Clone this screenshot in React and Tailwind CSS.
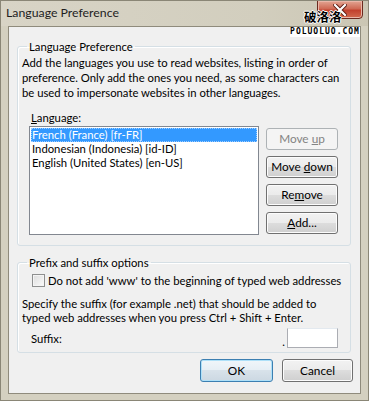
import React from 'react'

const langs = [
  'French (France) [fr-FR]',
  'Indonesian (Indonesia) [id-ID]',
  'English (United States) [en-US]',
]

function Btn({ children, disabled, primary, w = 'w-[72px]', h = 'h-[22px]' }) {
  const look = disabled
    ? 'border-[#adb2b5] bg-[#f4f4f4] text-[#838383]'
    : primary
    ? 'border-[#3c7fb1] bg-[linear-gradient(#f0f6fa_0%,#e6eef4_50%,#d8e2ea_50%,#ccd8e2_100%)] shadow-[inset_0_0_0_1px_#aee0f8]'
    : 'border-[#707070] bg-[linear-gradient(#f2f2f2_0%,#ebebeb_50%,#dddddd_50%,#cfcfcf_100%)] shadow-[inset_0_0_0_1px_#fcfcfc]'
  return (
    <div className={`${w} ${h} flex items-center justify-center rounded-[3px] border ${look}`}>
      <span className="leading-[14px] text-[11.8px]">{children}</span>
    </div>
  )
}

export default function App() {
  return (
    <div className="w-[369px] h-[401px] relative flex flex-col bg-[#d4d0c0] border border-[#8a8676] text-[11.3px] text-black font-['Lato',sans-serif] overflow-hidden">

      {/* Title bar */}
      <div className="h-[25px] flex items-center pl-[5px] text-[12.3px] text-[#1e1e1e] bg-[linear-gradient(90deg,#d8d4c6,#d2cebe_70%,#cbc6b4)]">
        Language Preference
      </div>

      {/* Close button */}
      <div className="absolute top-[-1px] right-[5px] w-[46px] h-[19px] rounded-b-[4px] border border-[#6b2a1f] bg-[linear-gradient(#e3a593_0%,#cf6a55_45%,#c2412d_55%,#d26a4e_100%)] shadow-[inset_0_0_0_1px_#eab6a8] flex items-center justify-center">
        <svg width="14" height="12" viewBox="0 0 14 12">
          <path d="M2 1 L12 11 M12 1 L2 11" stroke="#5a1a10" strokeWidth="4" strokeLinecap="square" />
          <path d="M2 1 L12 11 M12 1 L2 11" stroke="#ffffff" strokeWidth="2.2" strokeLinecap="square" />
        </svg>
      </div>

      {/* Watermark */}
      <div className="absolute top-[8px] left-[303px] text-[12.5px] font-bold leading-[16px] text-black font-['Noto_Sans_CJK_SC',sans-serif] [text-shadow:1px_0_0_#fff,-1px_0_0_#fff,0_1px_0_#fff,0_-1px_0_#fff]">
        破洛洛
      </div>
      <div className="absolute top-[26px] left-[289px] w-[70px] h-[10px] bg-white flex items-center justify-center text-[8px] font-bold leading-[8px] tracking-[1px] text-black font-['DejaVu_Sans_Mono',monospace]">
        POLUOLUO.COM
      </div>

      {/* Client area */}
      <div className="flex-1 ml-[7px] mr-[7px] mb-[6px] bg-[#f0f0f0] border border-[#8f8b7c] flex flex-col min-w-0">

        <fieldset className="min-w-0 ml-[8px] mr-[9px] mt-[12px] border border-[#d5dfe5] rounded-[3px] px-[4px] pt-[1px] pb-[10px] shadow-[inset_1px_1px_0_#fff]">
          <legend className="ml-[5px] px-[2px] leading-[15px]">Language Preference</legend>
          <p className="leading-[15px] whitespace-nowrap">
            Add the languages you use to read websites, listing in order of<br />
            preference. Only add the ones you need, as some characters can<br />
            be used to impersonate websites in other languages.
          </p>
          <div className="pl-[7px] mt-[10px]">
            <div className="pl-[2px] leading-[15px]"><u>L</u>anguage:</div>
            <div className="flex mt-[1px]">
              <div className="w-[230px] h-[109px] border border-[#828790] bg-white p-[1px]">
                {langs.map((l, i) => (
                  <div
                    key={l}
                    className={`h-[14px] leading-[14px] pl-[1px] whitespace-nowrap ${i === 0 ? 'bg-[#3399ff] text-white outline-1 outline-dotted outline-[#9fcdff] -outline-offset-1' : ''}`}
                  >
                    {l}
                  </div>
                ))}
              </div>
              <div className="ml-[7px] mt-[2px] flex flex-col gap-[6px]">
                <Btn disabled>Move <u>u</u>p</Btn>
                <Btn>Move <u>d</u>own</Btn>
                <Btn>Re<u>m</u>ove</Btn>
                <Btn><u>A</u>dd...</Btn>
              </div>
            </div>
          </div>
        </fieldset>

        <fieldset className="min-w-0 ml-[8px] mr-[9px] mt-[9px] border border-[#d5dfe5] rounded-[3px] px-[4px] pb-[4px] shadow-[inset_1px_1px_0_#fff]">
          <legend className="ml-[5px] px-[2px] leading-[15px]">Prefix and suffix options</legend>
          <div className="flex items-center mt-[3px] pl-[10px] h-[15px]">
            <div className="w-[13px] h-[13px] shrink-0 border border-[#8e8f8f] bg-[linear-gradient(135deg,#dcdcdc,#fbfbfb)] shadow-[inset_0_0_0_1px_#f4f4f4]" />
            <span className="ml-[3px] leading-[15px] whitespace-nowrap">Do not add 'www' to the beginning of typed web addresses</span>
          </div>
          <p className="mt-[9px] leading-[14px] whitespace-nowrap">
            Specify the suffix (for example .net) that should be added to<br />
            typed web addresses when you press Ctrl + Shift + Enter.
          </p>
          <div className="flex items-center justify-between mt-[3px] pl-[9px] pr-[8px]">
            <span className="leading-[15px]">Suffix:</span>
            <div className="flex items-end">
              <span className="leading-[12px] mr-[2px]">.</span>
              <div className="w-[51px] h-[20px] bg-white border border-[#abadb3] border-t-[#e3e9ef]" />
            </div>
          </div>
        </fieldset>

        <div className="flex justify-end gap-[9px] mt-[6px] mr-[7px]">
          <Btn primary w="w-[73px]" h="h-[23px]">OK</Btn>
          <Btn w="w-[71px]" h="h-[23px]">Cancel</Btn>
        </div>
      </div>
    </div>
  )
}
